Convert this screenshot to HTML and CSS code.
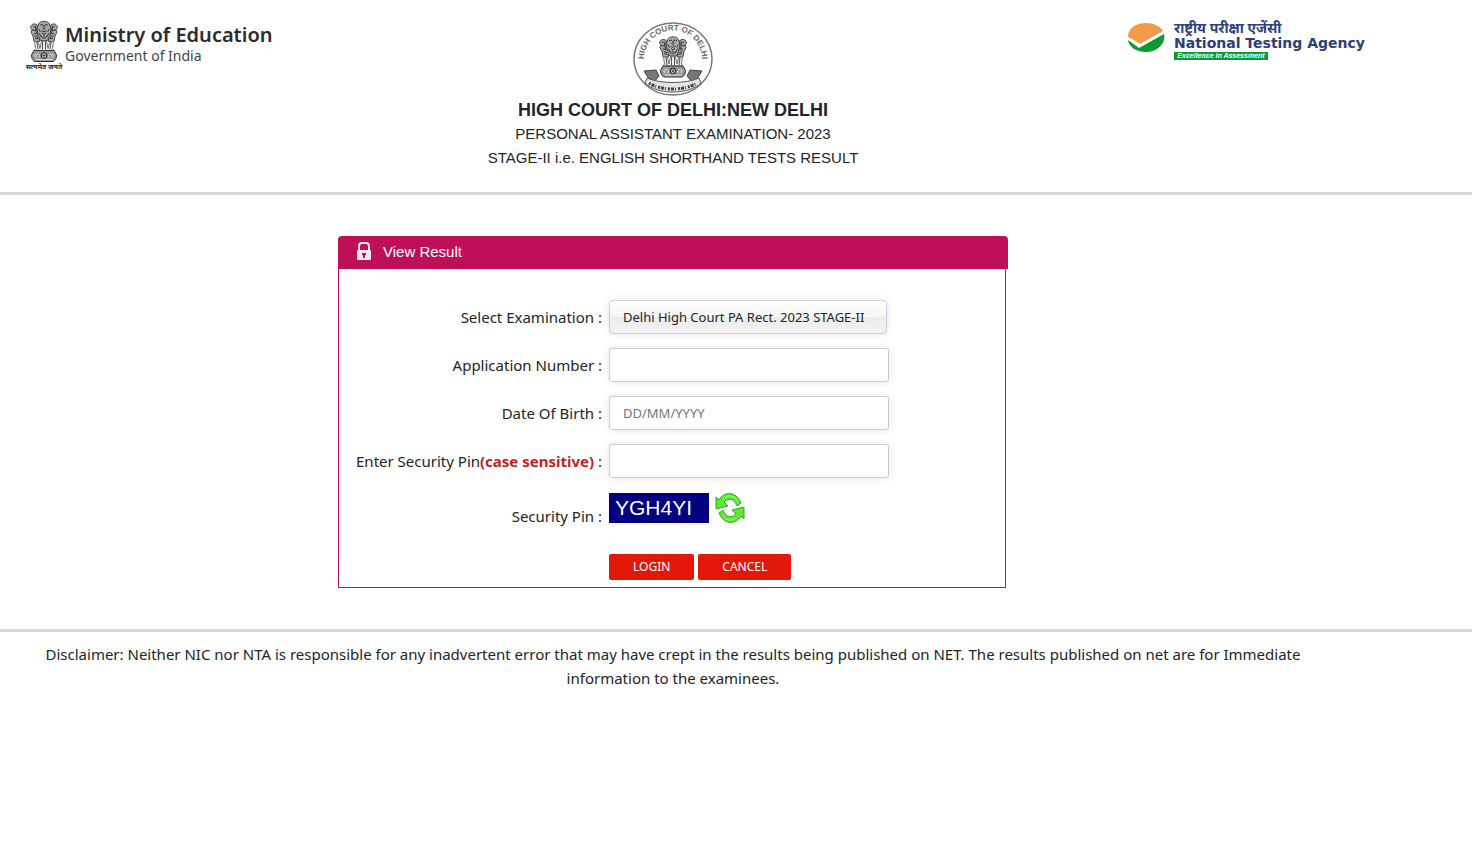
FILE: index.html
```html
<!DOCTYPE html>
<html lang="en">
<head>
  <meta charset="UTF-8">
  <title>View Result</title>
  <link rel="stylesheet" href="styles.css">
</head>
<body>

  <!-- Lion capital, used in both logos -->
  <svg class="defs" width="0" height="0" aria-hidden="true">
    <symbol id="emblem" viewBox="0 0 56 84">
      <g fill="#aaa" stroke="#444" stroke-width="2">
        <path d="M14 10C8 5 2 9 1 15l3 4-2 5 4 8 2 11h11l2-27z"/>
        <path d="M42 10c6-5 12-1 13 5l-3 4 2 5-4 8-2 11H37l-2-27z"/>
        <path d="M17 8C20 1 36 1 39 8l3 10-2 11-5 12H21l-5-12-2-11z"/>
      </g>
      <g fill="none" stroke="#333" stroke-width="2">
        <path d="M20 11c3-3 6-2 7 1M36 11c-3-3-6-2-7 1M28 12v8M23 21c3 3 7 3 10 0M24 26c3 3 5 3 8 0M17 18l4 6M39 18l-4 6M18 26l5 8M38 26l-5 8M22 31l3 6M34 31l-3 6M28 30v8"/>
        <path d="M6 13l5 1M4 20l6 1M12 12l-1 8 3 7M8 26l7 3M9 31l7 4M10 36l7 2M50 13l-5 1M52 20l-6 1M44 12l1 8-3 7M48 26l-7 3M47 31l-7 4M46 36l-7 2"/>
        <path d="M15 16l-3 4M41 16l3 4M24 16h1M31 16h1"/>
      </g>
      <path fill="#eee" stroke="#777" stroke-width="2" d="M9 42l2 15-3 4h40l-3-4 2-15-8 3-3 12-3-15h-10l-3 15-3-12z"/>
      <path fill="none" stroke="#555" stroke-width="2" d="M14 43l2 16M25 42v17M31 42v17M42 43l-2 16"/>
      <path fill="#999" stroke="#333" stroke-width="2" d="M8 61h40l2 3 3 6-1 7-5 6H9l-5-6-1-7 3-6z"/>
      <circle cx="28" cy="71" r="6" fill="#ddd" stroke="#222" stroke-width="2"/>
      <path fill="none" stroke="#222" stroke-width="1" d="M28 65v12M22 71h12M24 67l8 8M32 67l-8 8"/>
      <path fill="none" stroke="#ddd" stroke-width="2" d="M9 72c2-5 7-5 10-2M11 75l1-4M18 75l1-4M47 72c-2-5-7-5-10-2M45 75l-1-4M38 75l-1-4M11 79h34"/>
    </symbol>
  </svg>

  <header class="header">
    <div class="ministry">
      <div class="ministry-emblem">
        <svg width="28" height="42"><use href="#emblem"/></svg>
        <span class="motto" lang="hi">सत्यमेव जयते</span>
      </div>
      <div>
        <div class="ministry-name">Ministry of Education</div>
        <div class="ministry-sub">Government of India</div>
      </div>
    </div>

    <div class="court">
      <svg width="80" height="76" viewBox="0 0 80 76" role="img" aria-label="High Court of Delhi">
        <defs><path id="arc" d="M12 46A29 29 0 1 1 68 46"/></defs>
        <ellipse cx="40" cy="38" rx="39" ry="36" fill="#fff" stroke="#777" stroke-width="1.5"/>
        <text class="seal-text"><textPath href="#arc" startOffset="50%" text-anchor="middle">HIGH COURT OF DELHI</textPath></text>
        <use href="#emblem" x="26" y="14" width="28" height="43"/>
        <path fill="#777" stroke="#444" d="M11 50l12-1 3 6-5 6-5-3zM69 50l-12-1-3 6 5 6 5-3z"/>
        <path fill="#e4e4e4" stroke="#555" d="M14 57c13 6 39 6 52 0l2 5c-12 12-44 12-56 0z"/>
        <path fill="none" stroke="#444" stroke-width="3" stroke-dasharray="2 1 3 1 1 2" d="M16 62c12 8 36 8 48 0"/>
      </svg>
      <h1>HIGH COURT OF DELHI:NEW DELHI</h1>
      <p>PERSONAL ASSISTANT EXAMINATION- 2023</p>
      <p>STAGE-II i.e. ENGLISH SHORTHAND TESTS RESULT</p>
    </div>

    <div class="nta">
      <svg width="38" height="32" viewBox="0 0 38 32" aria-hidden="true">
        <path fill="#f39a4a" d="M1 15C1 6 9 1 19 1c8 0 14 3 17 8L13 22 5 17z"/>
        <path fill="#0a9b2e" d="M1 18l11 8L37 12c2 9-6 18-18 18C9 30 2 25 1 18z"/>
      </svg>
      <div class="nta-words">
        <div class="nta-hindi" lang="hi">राष्ट्रीय परीक्षा एजेंसी</div>
        <div class="nta-name">National Testing Agency</div>
        <div class="nta-tag">Excellence in Assessment</div>
      </div>
    </div>
  </header>

  <main class="main">
    <div class="panel">
      <h2 class="panel-title">
        <svg width="14" height="19" viewBox="0 0 14 19" aria-hidden="true">
          <path fill="none" stroke="#f3e6ec" stroke-width="2" d="M2 8V4q0-3 3-3h4q3 0 3 3v4"/>
          <rect y="8" width="14" height="10" rx="1" fill="#f3e6ec"/>
          <path fill="#bf1057" d="M5 11h4v2H8v3H6v-3H5z"/>
        </svg>
        View Result
      </h2>
      <form class="form">
        <label for="exam">Select Examination :</label>
        <select class="input select" id="exam">
          <option>Delhi High Court PA Rect. 2023 STAGE-II</option>
        </select>

        <label for="appNo">Application Number :</label>
        <input class="input" id="appNo" type="text">

        <label for="dob">Date Of Birth :</label>
        <input class="input" id="dob" type="text" placeholder="DD/MM/YYYY">

        <label for="pin">Enter Security Pin<b>(case sensitive)</b> :</label>
        <input class="input" id="pin" type="text">

        <span class="pin-label">Security Pin :</span>
        <div class="pin-row">
          <span class="captcha">YGH4YI</span>
          <button class="refresh" type="button" aria-label="Refresh security pin">
            <svg width="30" height="30" viewBox="0 0 30 30" aria-hidden="true">
              <g id="arrow">
                <path fill="#5bea35" stroke="#35a622" d="M1 4l3 3C9-2 21-2 26 10l-4 3C19 5 13 5 9 9l4 4-12 3z"/>
                <path fill="none" stroke="#a9f58e" d="M7 7c5-6 12-5 16 1"/>
              </g>
              <use href="#arrow" transform="rotate(180 15 15)"/>
            </svg>
          </button>
        </div>

        <div class="actions">
          <button class="button" type="submit">LOGIN</button>
          <button class="button" type="reset">CANCEL</button>
        </div>
      </form>
    </div>
  </main>

  <footer class="footer">
    <p>Disclaimer: Neither NIC nor NTA is responsible for any inadvertent error that may have crept in the results being published on NET. The results published on net are for Immediate information to the examinees.</p>
  </footer>

</body>
</html>
```
FILE: styles.css
```css
* { box-sizing: border-box; }
body { margin: 0; font-family: "Segoe UI", "Noto Sans", sans-serif; font-size: 15px; line-height: 24px; color: #212529; background: #fff; }
h1, h2, p { margin: 0; }
.defs { display: block; }

/* Header */
.header { display: grid; grid-template-columns: 1fr auto 1fr; align-items: start; padding: 20px 152px 22px 26px; border-bottom: 3px solid #d9d9d9; }
.ministry { display: flex; gap: 3px; }
.ministry-emblem { display: flex; flex-direction: column; align-items: center; width: 36px; }
.motto { font-size: 7px; line-height: 9px; font-weight: bold; white-space: nowrap; }
.ministry-name { margin-top: 3px; font-size: 20px; font-weight: 600; line-height: 24px; color: #2b2b2b; white-space: nowrap; }
.ministry-sub { font-size: 14px; line-height: 18px; color: #444; }
.court { padding-top: 1px; text-align: center; font-family: Arial, "Liberation Sans", sans-serif; }
.court svg { display: block; margin: 0 auto 1px; }
.court h1 { font-size: 18px; line-height: 24px; }
.seal-text { font: bold 8px Arial, "Liberation Sans", sans-serif; fill: #666; }
.nta { display: flex; justify-self: end; gap: 9px; margin-right: -53px; padding-top: 2px; color: #2c4077; }
.nta-words { width: 199px; }
.nta-hindi { font-size: 14px; font-weight: bold; line-height: 12px; white-space: nowrap; }
.nta-name { font-family: "DejaVu Sans", sans-serif; font-size: 14px; font-weight: bold; line-height: 18px; white-space: nowrap; }
.nta-tag { width: 94px; background: #0b9b35; color: #fff; font: italic bold 7px/8px Arial, "Liberation Sans", sans-serif; text-align: center; white-space: nowrap; }

/* Login panel */
.main { padding: 41px 126px 41px 0; }
.panel { width: 670px; margin: 0 auto; }
.panel-title { display: flex; align-items: center; gap: 12px; height: 33px; padding: 0 0 2px 19px; border-radius: 4px 4px 0 0; background: #bf1057; color: #fff; font: 15px Arial, "Liberation Sans", sans-serif; }
.form { display: grid; grid-template-columns: 263px 1fr; gap: 14px 7px; align-items: center; margin-right: 2px; padding: 31px 0 7px; border: 1px solid #bf1057; border-top: 0; }
.form label, .pin-label { text-align: right; white-space: nowrap; }
.form b { color: #c91d1d; }
.input { width: 280px; height: 34px; padding: 0 13px; border: 1px solid #ccc; border-radius: 3px; background: #fff; box-shadow: 0 0 8px #e4e4e4; font: inherit; font-size: 13px; color: #212529; }
.input::placeholder { color: #757575; }
.select { width: 278px; appearance: none; border-color: #ccced8; border-radius: 4px; background: linear-gradient(#fff, #f6f6f6 50%, #ececec 50%, #f2f2f2); }
.pin-label { padding-top: 10px; }
.pin-row { display: flex; gap: 6px; align-items: center; padding: 1px 0 6px; }
.captcha { width: 100px; height: 30px; padding-left: 6px; background: #000080; color: #fff; font: 21px/30px Arial, "Liberation Sans", sans-serif; }
.refresh { padding: 0; border: 0; background: none; cursor: pointer; }
.refresh svg { display: block; }
.actions { grid-column: 2; display: flex; gap: 4px; padding-top: 11px; }
.button { height: 26px; padding: 0 24px; border: 0; border-radius: 2px; background: #e3170a; color: #fff; font: inherit; font-size: 12px; cursor: pointer; }

/* Disclaimer */
.footer { padding: 10px 146px 11px 20px; border-top: 3px solid #d9d9d9; text-align: center; }
```
